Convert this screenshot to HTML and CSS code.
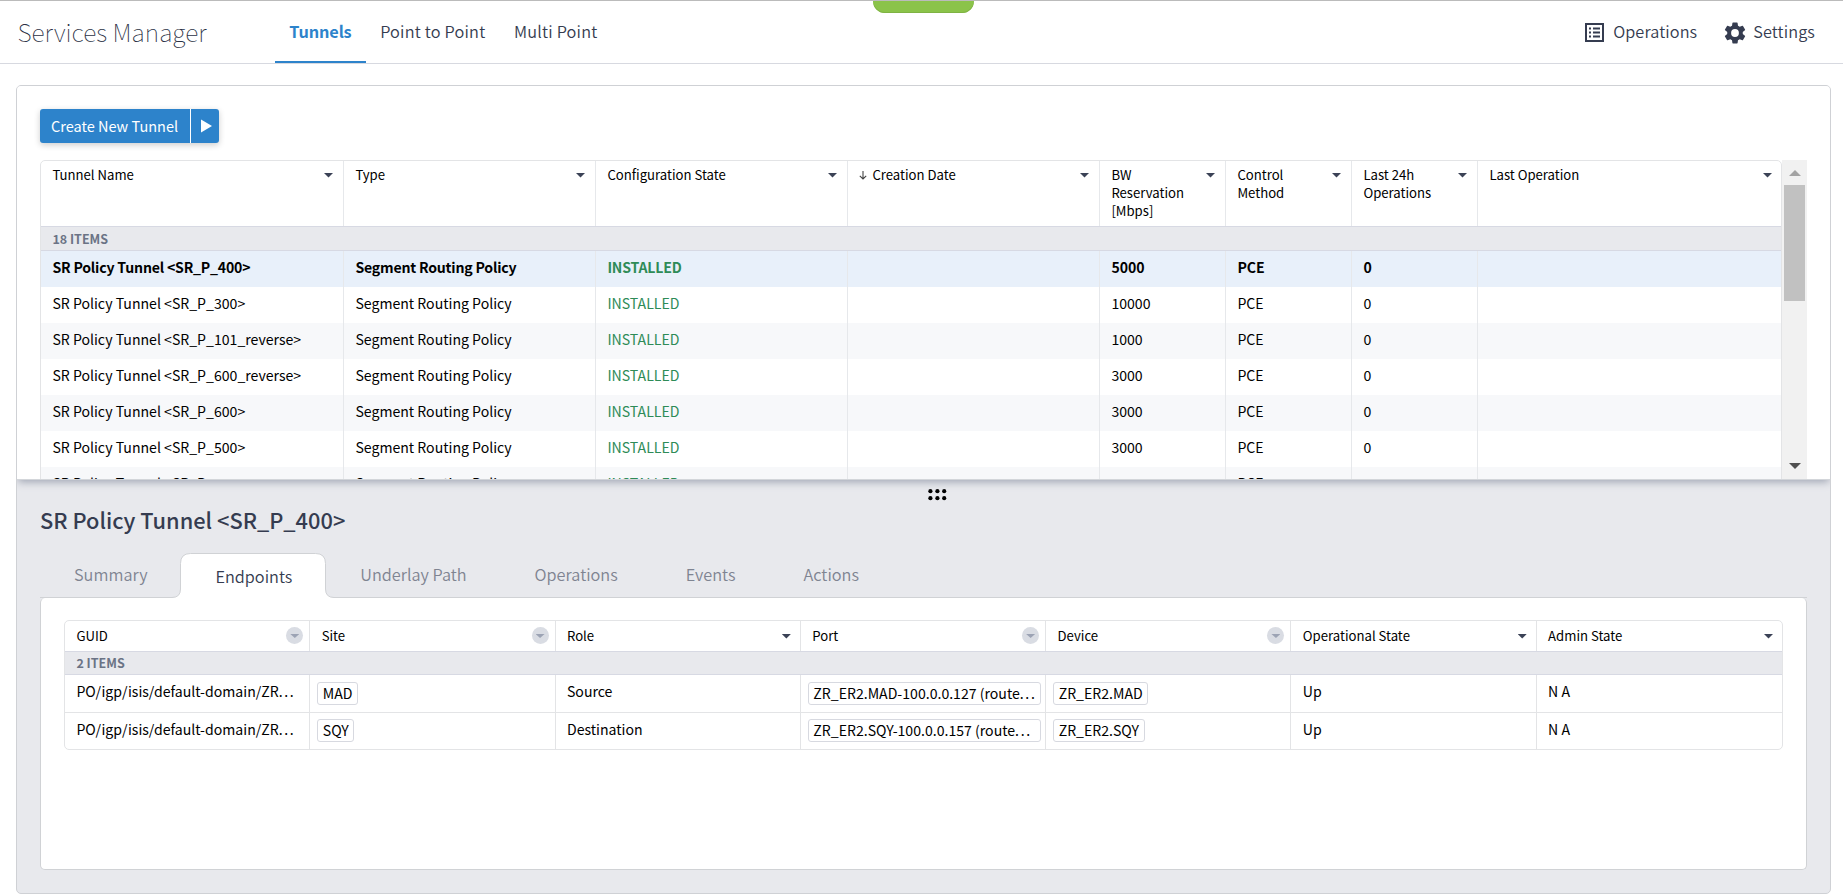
FILE: index.html
```
<!DOCTYPE html>
<html lang="en">
<head>
<meta charset="utf-8">
<title>Services Manager</title>
<link rel="stylesheet" href="styles.css">
</head>
<body>
<header class="topbar">
  <h1 class="brand">Services Manager</h1>
  <nav class="nav">
    <a class="nav-item active">Tunnels</a>
    <a class="nav-item">Point to Point</a>
    <a class="nav-item">Multi Point</a>
  </nav>
  <div class="tools">
    <a class="tool">
      <svg class="ic-list" width="19" height="19" viewBox="0 0 19 19"><rect x="1" y="1" width="17" height="17" fill="none" stroke="#353c50" stroke-width="2"/><path d="M4 4.5h2v2H4zM8 4.5h7v2H8zM4 8.5h2v2H4zM8 8.5h7v2H8zM4 12.5h2v2H4zM8 12.5h7v2H8z" fill="#353c50"/></svg>
      <span class="tool-text">Operations</span>
    </a>
    <a class="tool">
      <svg class="ic-gear" width="26" height="26" viewBox="0 0 24 24"><path fill="#353c50" d="M19.14 12.94c.04-.3.06-.61.06-.94s-.02-.64-.07-.94l2.03-1.58a.49.49 0 0 0 .12-.61l-1.92-3.32a.49.49 0 0 0-.59-.22l-2.39.96a7 7 0 0 0-1.62-.94l-.36-2.54a.48.48 0 0 0-.48-.41h-3.84a.47.47 0 0 0-.47.41l-.36 2.54c-.59.24-1.13.57-1.62.94l-2.39-.96a.48.48 0 0 0-.59.22L2.74 8.87a.47.47 0 0 0 .12.61l2.03 1.58c-.05.3-.09.63-.09.94s.02.64.07.94l-2.03 1.58a.49.49 0 0 0-.12.61l1.92 3.32c.12.22.37.29.59.22l2.39-.96c.5.38 1.03.7 1.62.94l.36 2.54c.05.24.24.41.48.41h3.84c.24 0 .44-.17.47-.41l.36-2.54a6.8 6.8 0 0 0 1.62-.94l2.39.96c.22.08.47 0 .59-.22l1.92-3.32a.47.47 0 0 0-.12-.61zM12 15.6a3.6 3.6 0 1 1 0-7.2 3.6 3.6 0 0 1 0 7.2z"/></svg>
      <span class="tool-text">Settings</span>
    </a>
  </div>
  <div class="notch"></div>
</header>

<main class="panel">
  <section class="list">
    <div class="split-btn"><span class="split-main">Create New Tunnel</span><span class="split-arrow"><svg width="11" height="14" viewBox="0 0 11 14"><path d="M0 0.5L11 7L0 13.5z" fill="#fff"/></svg></span></div>
    <div class="list-body">
      <div class="grid" id="tunnels">
        <div class="tr head">
          <div class="th"><span>Tunnel Name</span><i class="caret"></i></div>
          <div class="th"><span>Type</span><i class="caret"></i></div>
          <div class="th"><span>Configuration State</span><i class="caret"></i></div>
          <div class="th sorted"><svg class="sort" width="8" height="9" viewBox="0 0 8 9"><path d="M4 0V8M0.8 4.8L4 8L7.2 4.8" fill="none" stroke="#444" stroke-width="1.1"/></svg><span>Creation Date</span><i class="caret"></i></div>
          <div class="th"><span>BW Reservation [Mbps]</span><i class="caret"></i></div>
          <div class="th"><span>Control Method</span><i class="caret"></i></div>
          <div class="th"><span>Last 24h Operations</span><i class="caret"></i></div>
          <div class="th"><span>Last Operation</span><i class="caret"></i></div>
        </div>
        <div class="count">18 ITEMS</div>
        <div class="tr row selected"><div>SR Policy Tunnel &lt;SR_P_400&gt;</div><div>Segment Routing Policy</div><div class="ok">INSTALLED</div><div></div><div>5000</div><div>PCE</div><div>0</div><div></div></div>
        <div class="tr row"><div>SR Policy Tunnel &lt;SR_P_300&gt;</div><div>Segment Routing Policy</div><div class="ok">INSTALLED</div><div></div><div>10000</div><div>PCE</div><div>0</div><div></div></div>
        <div class="tr row alt"><div>SR Policy Tunnel &lt;SR_P_101_reverse&gt;</div><div>Segment Routing Policy</div><div class="ok">INSTALLED</div><div></div><div>1000</div><div>PCE</div><div>0</div><div></div></div>
        <div class="tr row"><div>SR Policy Tunnel &lt;SR_P_600_reverse&gt;</div><div>Segment Routing Policy</div><div class="ok">INSTALLED</div><div></div><div>3000</div><div>PCE</div><div>0</div><div></div></div>
        <div class="tr row alt"><div>SR Policy Tunnel &lt;SR_P_600&gt;</div><div>Segment Routing Policy</div><div class="ok">INSTALLED</div><div></div><div>3000</div><div>PCE</div><div>0</div><div></div></div>
        <div class="tr row"><div>SR Policy Tunnel &lt;SR_P_500&gt;</div><div>Segment Routing Policy</div><div class="ok">INSTALLED</div><div></div><div>3000</div><div>PCE</div><div>0</div><div></div></div>
        <div class="tr row alt"><div>SR Policy Tunnel &lt;SR_P_...</div><div>Segment Routing Policy</div><div class="ok">INSTALLED</div><div></div><div></div><div>PCE</div><div></div><div></div></div>
      </div>
      <div class="scrollbar">
        <svg class="arrow" width="12" height="6" viewBox="0 0 12 6"><path d="M6 0L12 6H0z" fill="#a3a3a3"/></svg>
        <div class="thumb"></div>
        <svg class="arrow down" width="12" height="6" viewBox="0 0 12 6"><path d="M0 0H12L6 6z" fill="#505050"/></svg>
      </div>
    </div>
  </section>

  <section class="detail">
    <svg class="grip" width="19" height="12" viewBox="0 0 19 12"><g fill="#000"><circle cx="2.4" cy="2.2" r="2.1"/><circle cx="9.4" cy="2.2" r="2.1"/><circle cx="16.2" cy="2.2" r="2.1"/><circle cx="2.4" cy="9.2" r="2.1"/><circle cx="9.4" cy="9.2" r="2.1"/><circle cx="16.2" cy="9.2" r="2.1"/></g></svg>
    <h2 class="detail-title">SR Policy Tunnel &lt;SR_P_400&gt;</h2>
    <div class="tabs">
      <a class="tab">Summary</a>
      <a class="tab on">
        <svg class="tab-shape" width="171" height="46" viewBox="0 0 171 46"><path d="M5 44.5Q13.500 44.500 13.500 36V10.500Q13.500 0.500 23.500 0.500H148.500Q158.500 0.500 158.500 10.500V36Q158.500 44.500 167 44.500V46H5z" fill="#fff"/><path d="M5 44.500Q13.500 44.500 13.500 36V10.500Q13.500 0.500 23.500 0.500H148.500Q158.500 0.500 158.500 10.500V36Q158.500 44.500 167 44.500" fill="none" stroke="#d0d2d5"/></svg>
        <span class="tab-label">Endpoints</span>
      </a>
      <a class="tab">Underlay Path</a>
      <a class="tab">Operations</a>
      <a class="tab">Events</a>
      <a class="tab">Actions</a>
    </div>
    <div class="sheet">
      <div class="grid ends">
        <div class="er ehead">
          <div>GUID<i class="dot"></i></div><div>Site<i class="dot"></i></div><div>Role<i class="caret"></i></div><div>Port<i class="dot"></i></div><div>Device<i class="dot"></i></div><div>Operational State<i class="caret"></i></div><div>Admin State<i class="caret"></i></div>
        </div>
        <div class="count">2 ITEMS</div>
        <div class="er erow"><div>PO/igp/isis/default-domain/ZR<span class="more">...</span></div><div class="chips"><span class="chip">MAD</span></div><div>Source</div><div class="chips"><span class="chip wide">ZR_ER2.MAD-100.0.0.127 (route<span class="more">...</span></span></div><div class="chips"><span class="chip">ZR_ER2.MAD</span></div><div>Up</div><div>N A</div></div>
        <div class="er erow last"><div>PO/igp/isis/default-domain/ZR<span class="more">...</span></div><div class="chips"><span class="chip">SQY</span></div><div>Destination</div><div class="chips"><span class="chip wide">ZR_ER2.SQY-100.0.0.157 (route<span class="more">...</span></span></div><div class="chips"><span class="chip">ZR_ER2.SQY</span></div><div>Up</div><div>N A</div></div>
      </div>
    </div>
  </section>
</main>
</body>
</html>
```
FILE: styles.css
```
* { box-sizing: border-box; }
body {
  margin: 0;
  width: 1843px;
  height: 894px;
  overflow: hidden;
  background: #fff;
  color: #000;
  font: 14.1px "Noto Sans CJK SC", "Open Sans", sans-serif;
  white-space: nowrap;
}
.topbar {
  position: relative;
  display: flex;
  height: 64px;
  border-top: 1px solid #bbb;
  border-bottom: 1px solid #d7d9e0;
  color: #353c50;
}
.notch {
  position: absolute;
  left: 873px;
  top: 0;
  width: 101px;
  height: 12px;
  border-radius: 0 0 12px 12px;
  background: #8bc34a;
  box-shadow: inset 0 -1px 0 #7fb343;
}
.brand {
  margin: 0;
  padding-left: 17.5px;
  width: 275px;
  font-family: "Noto Sans CJK SC Thin", "Noto Sans CJK SC Light", "Noto Sans CJK SC", sans-serif;
  font-size: 24.7px;
  font-weight: 200;
  line-height: 60px;
  color: #2b3145;
}
.nav, .tools, .tabs { font-family: "Noto Sans CJK SC DemiLight", "Noto Sans CJK SC", sans-serif; }
.nav { display: flex; font-size: 16.3px; line-height: 60px; letter-spacing: .2px; }
.nav-item { height: 62px; padding: 0 14.3px; }
.nav-item.active {
  color: #2d83cb;
  font-family: "Noto Sans CJK SC", sans-serif;
  font-weight: 600;
  letter-spacing: -.15px;
  border-bottom: 2px solid #2d83cb;
}
.tools { display: flex; margin-left: auto; padding-right: 28px; font-size: 16.3px; line-height: 60px; letter-spacing: .1px; }
.tool { display: flex; }
.tool + .tool { margin-left: 25px; }
.ic-list { margin: 22px 9px 0 0; }
.ic-gear { margin: 19px 5px 0 0; }

.panel {
  margin: 21px 12px 0 16px;
  height: 809px;
  border: 1px solid #cfd1d5;
  border-radius: 5px;
  background: #e8e9ed;
  overflow: hidden;
}
.list {
  position: relative;
  height: 394px;
  padding: 23px 23px 0;
  background: #fff;
  border-bottom: 1px solid #d3d6da;
  box-shadow: 0 3px 8px -1px #9ea4b2;
}
.split-btn {
  display: flex;
  width: 179px;
  height: 34px;
  border-radius: 3px;
  background: #2d83cb;
  color: #fff;
  font-size: 14.5px;
  line-height: 33px;
  box-shadow: 0 2px 6px rgba(0, 0, 0, .2);
}
.split-main { width: 150px; padding-left: 11px; }
.split-arrow { width: 29px; padding-left: 10px; border-left: 1px solid #fff; }
.split-arrow svg { display: block; margin-top: 10px; }
.list-body { display: flex; height: 319px; margin-top: 17px; overflow: hidden; }
.grid { border: 1px solid #e3e4e6; border-radius: 5px; background: #fff; overflow: hidden; }
#tunnels { width: 1742px; height: 400px; }
.tr { display: grid; grid-template-columns: 303px 252px 252px 252px 126px 126px 126px 304px; }
.tr > div { border-right: 1px solid #e6e8eb; }
.tr > div:last-child { border-right: 0; }
.head { height: 65px; }
.th { display: flex; justify-content: space-between; padding: 5px 10px 0 11.4px; font-size: 13.15px; line-height: 18px; white-space: normal; }
.th.sorted span { margin-right: auto; }
.sort { margin: 5px 5px 0 0; }
.caret {
  flex: none;
  width: 9px;
  height: 5px;
  margin-top: 7px;
  background: #3b4256;
  clip-path: polygon(0 0, 100% 0, 50% 90%);
}
.count {
  height: 25px;
  padding-left: 11.4px;
  border-top: 1px solid #d7d9e3;
  border-bottom: 1px solid #d7d9e3;
  background: #e8e9ed;
  color: #6b7385;
  font-size: 12.5px;
  font-weight: 600;
  line-height: 23px;
}
.row { height: 36px; line-height: 32px; }
.row > div { padding-left: 11.4px; }
.alt { background: #f7f8fa; }
.selected { background: #e8f0fa; font-weight: 600; }
.selected > div:nth-child(-n+3) { letter-spacing: -.2px; }
.ok { color: #2e8b57; }
.scrollbar { width: 25px; height: 319px; padding: 10px 2px 0; background: #f1f1f1; display: flex; flex-direction: column; }
.arrow { display: block; margin-left: 5px; }
.thumb { height: 116px; margin-top: 9px; background: #c1c1c1; }
.down { margin-top: 162px; }

.detail { display: flex; flex-direction: column; padding: 9px 23px 0; }
.grip { margin-left: 887.5px; }
.detail-title { margin: 0; height: 53px; font-size: 21.8px; font-weight: 500; line-height: 37px; color: #353c50; }
.tabs { display: flex; height: 44px; border-bottom: 1px solid #d0d2d5; color: #7f8491; font-size: 16.3px; line-height: 41px; }
.tab { position: relative; padding: 0 34px; }
.tab.on { color: #353c50; padding-top: 2px; }
.tab-shape { position: absolute; left: -14px; top: -1px; }
.tab-label { position: relative; }
.sheet { height: 272px; padding: 22px 23px; border: 1px solid #d0d2d5; border-top: 0; border-radius: 5px; background: #fff; }
.er { display: grid; grid-template-columns: repeat(7, 1fr); }
.er > div { display: flex; padding-left: 11.4px; border-right: 1px solid #e3e4e6; min-width: 0; }
.er > div:last-child { border-right: 0; }
.ehead { height: 30px; line-height: 29px; font-size: 13.15px; }
.ehead .caret { margin: 13px 9px 0 auto; }
.dot { position: relative; width: 17px; height: 17px; margin: 6px 6px 0 auto; border-radius: 50%; background: #d9dce3; }
.dot::after { content: ""; display: block; width: 9px; height: 4px; margin: 7px 4px; background: #9ca3b4; clip-path: polygon(0 0, 100% 0, 50% 100%); }
.ends .count { height: 24px; line-height: 22px; }
.erow { height: 38px; line-height: 32px; border-bottom: 1px solid #e3e4e6; }
.erow.last { height: 36px; border-bottom: 0; }
.er > .chips { padding: 7px 4px 0 7px; }
.last > .chips { padding-top: 6px; }
.chip { height: 23px; padding: 0 4.5px; border: 1px solid #d7d9e0; border-radius: 3px; line-height: 20px; }
.wide { flex: 1; min-width: 0; }
.more { letter-spacing: 1.6px; }
```
